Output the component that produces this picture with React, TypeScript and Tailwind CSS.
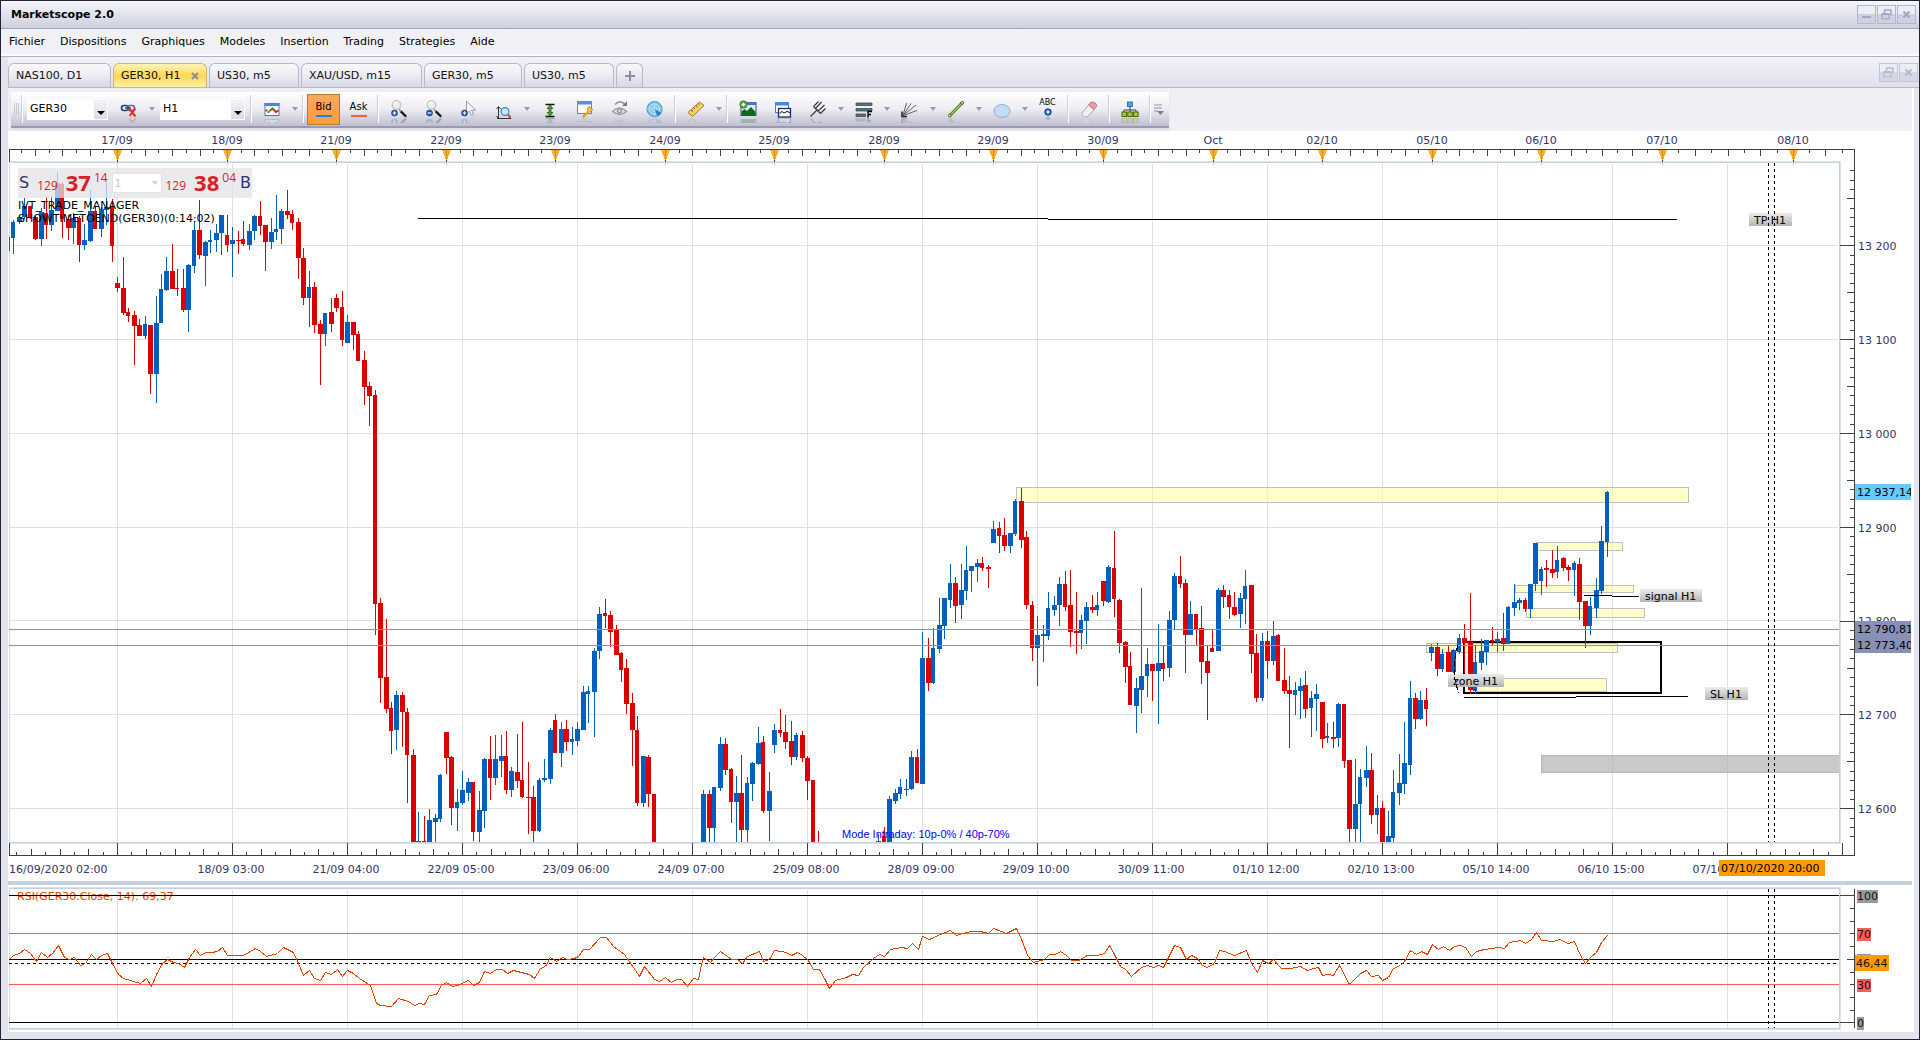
import React, { useId } from "react";

const FONT = "font-['DejaVu_Sans',Verdana,sans-serif]";

/* ---------- Price series: direction, then high / body top / body bottom / low ---------- */

const FIRST_SLOT = 19;
const slotX = (slot: number) => Math.round(117.2 + (slot - FIRST_SLOT) * 5.476);

const RUNS: { start: number; bars: string }[] = [
  {
    start: 0,
    bars: "B220 222 238 254,B216 217 222 224,B198 206 217 219,R206 206 218 219,R216 217 239 240,B208 212 239 246,R197 213 225 239,B196 210 225 231,B172 183 211 211,R182 184 219 238,R215 219 228 240,B213 218 228 244,R216 218 245 262,B224 240 245 250,B190 211 241 242,R207 211 229 229,B207 209 229 237,B183 207 210 225,R199 207 246 262,R277 283 288 292,R257 288 313 315,R308 312 316 322,R311 315 326 365,R319 325 336 336,B316 324 336 339,R325 325 374 394,B296 323 374 403,B274 289 323 323,B257 271 290 291,R244 271 289 289,R269 288 289 296,R269 288 310 312,B264 265 310 332,B221 230 266 273,R200 230 255 259,B241 242 256 286,B230 240 242 253,B224 233 240 252,B215 215 233 255,R215 235 245 252,B227 240 244 277,R231 240 241 254,R221 239 244 246,B224 231 245 250,B215 216 231 240,R201 216 226 235,R225 225 242 271,B218 232 242 249,B195 229 232 240,B209 211 229 244,R190 211 215 219,R210 214 223 230,R218 222 258 279,R248 258 298 305,B271 287 298 327,R282 287 325 333,R320 324 334 385,B313 313 334 346,R298 312 324 332,R294 298 308 312,R291 307 340 346,B315 322 343 343,R322 322 335 350,R331 334 361 361,R351 360 387 405,R382 386 396 426,R390 395 604 635,R598 603 678 703,R619 677 709 713,R702 708 731 754,B691 695 730 750,R692 695 712 747,R708 712 755 803,R749 755 842 842,B812 841 842 842,R816 841 842 842,B809 820 842 842,B814 818 822 842,B774 775 819 822,R732 732 758 774,R756 757 808 825,B789 802 808 831,B771 790 803 805,B778 782 793 801,R782 782 832 841,B791 810 832 842,B758 759 811 828,R736 759 778 800,B735 759 778 785,B735 756 761 777,R731 756 790 794,B767 771 790 797,R734 772 781 788,R722 780 797 798,R762 797 798 834,R786 797 831 842,B778 780 831 832,B759 778 780 782,B728 730 779 784,R714 720 753 753,B722 729 753 767,R720 729 742 751,B727 739 742 755,B722 729 741 746,B686 692 730 730,B686 691 694 723,B648 651 692 737,B607 614 651 659,R599 613 616 628,R611 615 632 647,R625 629 655 655,R652 653 670 682,R659 668 704 714,R693 703 730 766,R716 730 803 806,B756 756 803 807,R755 757 794 807,R794 794 842 842",
  },
  {
    start: 126,
    bars: "B790 794 842 842,R790 794 828 842,B787 787 828 842,B737 744 788 791,R738 744 770 775,R768 769 802 823,B776 793 802 842,R755 793 830 842,B777 783 830 842,B762 763 784 801,B727 743 764 765,R736 742 811 813,B772 791 811 841,B724 730 745 753,R709 730 733 737,R715 732 742 749,R721 741 757 765,B733 735 757 760,R731 735 758 762,R756 758 781 800,R780 780 842 842,R831 842 842 842",
  },
  {
    start: 158,
    bars: "B834 841 842 842,R827 836 842 842,B796 799 842 842,B789 793 801 804,B779 787 794 799,B779 789 790 796,B751 757 789 790,R749 757 783 783,B632 658 784 784,R638 658 683 691,B628 648 683 684,B598 625 649 653,B598 598 626 639,B564 583 600 608,R577 583 606 623,B564 590 605 619,B546 570 591 600,B566 566 571 592,B559 563 567 582,R557 563 568 571,R565 567 569 588,B521 529 543 543,R522 528 536 553,R518 535 546 551,B533 533 546 553,B499 501 534 536,R488 501 540 548,R531 537 605 609,R601 605 648 661,B616 635 648 686,B625 634 636 662,B592 608 636 640,B596 605 610 616,B577 584 605 626,R571 584 607 611,R570 605 632 647,R592 631 633 654,B615 620 633 649,B602 607 621 644,R595 607 610 613,B592 605 610 616,R581 581 601 606,B565 567 602 603,R531 568 599 617,R599 600 643 653,R641 642 667 683,R652 666 705 705,B678 688 706 733,B588 676 690 713,B648 664 676 697,R664 664 671 701,B624 663 671 724,R646 663 669 681,B611 620 668 677,B573 576 620 629,R556 576 584 588,R579 583 635 673,B601 614 635 635,R614 614 629 645,R606 628 662 684,R646 661 673 720,R630 648 652 652,B588 590 651 651,R585 590 597 608,R590 595 607 619,R592 607 615 616,B593 598 614 628,B570 586 599 624,R585 585 654 673,R634 653 698 702,B633 641 698 701,R631 641 661 679,B621 636 661 665,R634 635 681 681,R648 680 691 694,R676 690 694 748,B682 690 695 715,B678 686 691 719,R671 685 709 718,B691 698 708 737,B684 694 699 731,R702 702 739 748,B723 736 738 743,R722 737 739 748,B703 704 738 747,R704 704 761 768,R760 760 829 842,B759 804 829 842,B769 777 804 842,B746 770 778 787,R753 770 815 824,B795 808 815 834,R801 808 842 842,B811 836 842 842,B770 792 838 842,B754 783 793 805,B722 763 784 794,B681 698 765 775,R693 698 719 729,B691 700 719 720,R688 700 709 726,B644 647 653 661,R643 647 669 676,B649 654 669 672,R646 652 672 672,B649 650 672 673,B634 638 652 654,R624 638 643 673,R593 642 690 694,B646 662 691 694,B639 651 663 670,B640 640 652 665,R627 640 641 645,B632 639 642 652,R613 638 644 651,B606 607 644 644,B584 602 608 616,B598 600 603 610,R598 600 609 612,B584 584 609 618,B543 543 584 591,B567 569 581 595,R560 568 570 587,R550 569 573 578,B546 560 572 578,R557 558 568 571,R565 567 570 581,B561 563 570 596,R558 564 602 620,R601 601 626 648,B597 606 626 635,B578 590 608 618,B526 541 591 594,B491 492 542 557",
  },
];

const CANDLES = RUNS.flatMap(({ start, bars }) =>
  bars.split(",").map((bar, i) => {
    const [high, top, bottom, low] = bar.slice(1).split(" ").map(Number);
    return { x: slotX(start + i), up: bar[0] === "B", high, top, bottom, low };
  }),
);

const RSI_POINTS =
  "9,959 13,955 19,953 24,949 30,953 36,961 41,952 47,957 52,953 58,945 64,957 69,959 74,957 80,965 85,963 91,954 96,959 101,955 107,953 112,963 118,974 123,978 140,983 146,978 151,986 156,974 162,963 167,959 173,962 178,963 184,967 189,957 195,949 200,955 205,952 211,952 217,951 222,947 227,955 243,955 255,948 260,951 266,956 277,953 283,947 293,952 298,963 303,975 309,970 314,978 320,980 325,972 331,974 337,969 342,976 347,970 353,973 359,978 370,985 376,1003 380,1005 391,1006 398,998 408,1001 414,1005 419,1003 424,1004 429,995 436,994 441,985 446,982 452,986 457,985 468,980 473,985 479,982 484,971 490,973 496,969 502,969 507,973 513,970 529,974 534,978 540,968 545,966 550,957 556,961 562,957 567,959 574,958 578,956 583,949 589,949 600,937 606,937 613,946 624,954 633,967 639,976 644,966 654,979 659,981 665,977 671,982 676,979 681,979 687,986 693,978 698,979 701,964 703,957 710,962 715,956 720,951 731,959 737,959 742,963 747,956 759,951 763,961 769,959 774,950 786,952 791,955 797,952 802,955 808,960 813,969 819,969 824,978 829,988 835,980 846,977 852,974 858,975 863,967 873,958 879,954 884,956 890,949 901,947 907,948 912,943 918,949 922,936 929,939 940,934 950,930 956,935 962,933 971,931 980,931 988,933 993,928 1006,933 1016,928 1022,941 1027,955 1033,962 1044,959 1049,954 1055,954 1060,951 1066,955 1071,960 1078,960 1087,955 1097,955 1104,953 1109,945 1114,954 1120,966 1125,969 1131,976 1141,967 1147,965 1153,967 1158,965 1163,967 1169,955 1174,945 1180,947 1186,959 1191,955 1197,958 1202,965 1207,967 1214,963 1219,950 1224,951 1234,955 1246,950 1251,963 1257,972 1262,960 1268,963 1273,959 1279,966 1281,968 1290,968 1300,966 1307,970 1313,968 1318,967 1322,975 1328,974 1333,975 1339,965 1349,984 1360,973 1366,970 1371,976 1378,975 1382,980 1388,977 1393,968 1400,965 1404,961 1410,950 1416,954 1421,951 1427,954 1432,944 1438,949 1443,946 1449,950 1454,946 1460,945 1465,947 1471,956 1476,951 1484,949 1498,947 1504,948 1509,942 1520,940 1525,943 1531,939 1536,932 1541,940 1553,941 1559,939 1568,943 1574,941 1580,955 1585,963 1591,956 1596,952 1601,942 1607,935";

const SESSION_MARKS: [number, string][] = [
  [117, "17/09"], [227, "18/09"], [336, "21/09"], [446, "22/09"], [555, "23/09"], [665, "24/09"],
  [774, "25/09"], [884, "28/09"], [993, "29/09"], [1103, "30/09"], [1213, "Oct"], [1322, "02/10"],
  [1432, "05/10"], [1541, "06/10"], [1662, "07/10"], [1793, "08/10"],
];

const TIME_LABELS = [
  "18/09 03:00", "21/09 04:00", "22/09 05:00", "23/09 06:00", "24/09 07:00", "25/09 08:00", "28/09 09:00",
  "29/09 10:00", "30/09 11:00", "01/10 12:00", "02/10 13:00", "05/10 14:00", "06/10 15:00", "07/10 16:00",
];

const GRID_X = Array.from({ length: 15 }, (_, i) => 117 + i * 115);
const PRICES: [number, string][] = [
  [245, "13 200"], [339, "13 100"], [433, "13 000"], [527, "12 900"], [620, "12 800"], [714, "12 700"], [808, "12 600"],
];

const eighth = (i: number) => (i % 2 ? 3 : 6);

/* ticks as [position, length] */
const TOP_TICKS: [number, number][] = (() => {
  const out: [number, number][] = [];
  for (let i = 1; i < 8; i++) out.push([Math.round(117 - i * 13.7), eighth(i)]);
  SESSION_MARKS.slice(0, -1).forEach(([x], s) => {
    const step = (SESSION_MARKS[s + 1][0] - x) / 8;
    for (let i = 1; i < 8; i++) out.push([Math.round(x + i * step), eighth(i)]);
  });
  out.push([1809, 3], [1825, 6], [1842, 3]);
  return out;
})();

const BOTTOM_TICKS: [number, number][] = (() => {
  const out: [number, number][] = [[9, 12], [1842, 12]];
  for (let g = -1; g < 15; g++)
    for (let i = 0; i < 8; i++) {
      const x = Math.round(117 + g * 115 + i * 14.38);
      if (x > 10 && x < 1840) out.push([x, i === 0 ? 12 : eighth(i)]);
    }
  return out;
})();

const PRICE_TICKS: [number, number][] = Array.from({ length: 74 }, (_, i) => {
  const k = i - 8;
  return [Math.round(245.2 + k * 9.385), k % 10 === 0 ? 14 : k % 5 === 0 ? 7 : 4] as [number, number];
}).filter(([y]) => y < 842);

const ZONES = [
  [1016, 487, 673, 15],
  [1536, 542, 87, 8],
  [1515, 585, 119, 7],
  [1526, 608, 119, 9],
  [1426, 643, 192, 9],
  [1476, 678, 131, 13],
];

const NOTES: [number, number, number, string][] = [
  [1640, 589, 62, "signal H1"],
  [1448, 674, 56, "zone H1"],
  [1705, 687, 43, "SL H1"],
  [1749, 213, 43, "TP H1"],
];

const vPath = (list: number[], y1: number, y2: number) => list.map((x) => `M${x}.5 ${y1}V${y2}`).join("");

function PriceChart() {
  const shade = useId();
  return (
    <svg viewBox="8 131 1904 750" className="block h-auto w-full bg-white text-[11px]" role="img" aria-label="GER30 H1">
      <defs>
        <linearGradient id={shade} x1="0" y1="0" x2="0" y2="1">
          <stop offset="0" stopColor="#ececec" />
          <stop offset="1" stopColor="#b4b4b4" />
        </linearGradient>
      </defs>
      <g shapeRendering="crispEdges" fill="none">
        <path d={vPath(GRID_X, 164, 842)} stroke="#e0e0e0" />
        <path d={PRICES.map(([y]) => `M9 ${y}.5H1838`).join("")} stroke="#e0e0e0" />
        <path d="M9.5 164V842" stroke="#d4d8e0" />
        <g stroke="#c0c0c0">
          {ZONES.map(([x, y, w, h]) => (
            <rect key={`${x}-${y}`} x={x + 0.5} y={y + 0.5} width={w - 1} height={h} fill="#ffff99" fillOpacity="0.5" />
          ))}
          <rect x="1541.5" y="755.5" width="298" height="17" fill="#b0b0b0" fillOpacity="0.68" stroke="#b8b8b8" />
        </g>
        <rect x="1464" y="642" width="197" height="51" stroke="#000" strokeWidth="2" />
        <path d="M9.5 237V251" stroke="#0060c0" />
        {CANDLES.map((c, i) => (
          <g key={i} fill={c.up ? "#0060c0" : "#dc0000"}>
            <rect x={c.x} y={c.high} width="1" height={Math.max(c.low - c.high, 1)} />
            {c.top < 842 && <rect x={c.x - 2} y={c.top} width={i % 3 === 0 ? 4 : 5} height={Math.max(c.bottom - c.top, 1)} />}
          </g>
        ))}
        <path d="M9 629.5H1839M9 645.5H1839" stroke="#8890b8" />
        <path d="M418 218.5H1048M1048 219.5H1677M1464 697.5H1576M1576 696.5H1688M1584 595.5H1612M1612 596.5H1639" stroke="#000" />
        {NOTES.map(([x, y, w, label]) => (
          <rect key={label} x={x} y={y} width={w} height="13" fill={`url(#${shade})`} />
        ))}
        <path d="M1458 645C1453 662 1452 676 1459 693" stroke="#000" strokeDasharray="6 2" />
        <path d="M1768.5 163V842M1774.5 163V842" stroke="#000" strokeDasharray="3 3" />

        <path d="M9 161.5H1841M1840.5 161V843M9 843.5H1841" stroke="#dde3ea" />
        <path d="M9 162.5H1839.5V842.5H9" stroke="#c4d0e0" />
        <path d="M9.5 162V149.5H1854.5V855.5H9V843" stroke="#404040" />
        <path d={TOP_TICKS.map(([x, l]) => `M${x}.5 150v${l}`).join("")} stroke="#404040" />
        <path d={BOTTOM_TICKS.map(([x, l]) => `M${x}.5 855v-${l}`).join("")} stroke="#404040" />
        <path d={PRICE_TICKS.map(([y, l]) => `M1854 ${y}.5h-${l}`).join("")} stroke="#404040" />
        {SESSION_MARKS.map(([x]) => (
          <g key={x}>
            <path d={`M${x - 4} 150H${x + 5}L${x + 1} 160H${x}Z`} fill="#ffae33" />
            <path d={`M${x}.5 150V160`} stroke="#e08a10" />
            <path d={`M${x}.5 160V162`} stroke="#404040" />
            <path d={`M${x}.5 162V165`} stroke="#c4d0e0" />
          </g>
        ))}
      </g>
      <g fill="#333366" textAnchor="middle">
        {SESSION_MARKS.map(([x, label]) => (
          <text key={x} x={x} y="144">{label}</text>
        ))}
        {TIME_LABELS.map((label, i) => (
          <text key={label} x={231 + i * 115} y="873">{label}</text>
        ))}
        <text x="9" y="873" textAnchor="start">16/09/2020 02:00</text>
      </g>
      <g fill="#333366">
        {PRICES.map(([y, label]) => (
          <text key={label} x="1858" y={y + 5}>{label}</text>
        ))}
      </g>
      <rect x="1855" y="484" width="56" height="16" fill="#66ccff" />
      <rect x="1855" y="621" width="56" height="32" fill="#8890b8" />
      <rect x="1719" y="860" width="106" height="16" fill="#ff9900" />
      <g fill="#000">
        <text x="1857" y="496">12 937,14</text>
        <text x="1857" y="633">12 790,81</text>
        <text x="1857" y="649">12 773,40</text>
        <text x="1721" y="872">07/10/2020 20:00</text>
        {NOTES.map(([x, y, , label]) => (
          <text key={label} x={x + 5} y={y + 11}>{label}</text>
        ))}
      </g>
      <rect x="1911" y="480" width="1" height="180" fill="#fff" />
      <text x="842" y="838" fill="#0000ff" className="font-['Liberation_Sans',Arial,sans-serif]">
        Mode Intraday: 10p-0% / 40p-70%
      </text>
    </svg>
  );
}

const RSI_TICKS = Array.from({ length: 11 }, (_, i) => [Math.round(1022.3 - i * 12.7), i === 0 || i === 10 ? 14 : i === 5 ? 7 : 4]);

function RsiChart() {
  return (
    <svg viewBox="8 885 1904 146" className="block h-auto w-full bg-white text-[11px]" role="img" aria-label="RSI">
      <text x="17" y="900" fill="#dd4400">RSI(GER30.Close, 14): 69,37</text>
      <g shapeRendering="crispEdges" fill="none">
        <path d={vPath(GRID_X, 890, 1028)} stroke="#e0e0e0" />
        <path d="M9.5 890V1028" stroke="#d4d8e0" />
        <path d="M9 933.5H1839M9 984.5H1839" stroke="#ff5a5a" />
        <path d="M9 895.5H1854M9 959.5H1839M9 1022.5H1854" stroke="#000" />
        <path d="M9 963.5H1840M1768.5 889V1028M1774.5 889V1028" stroke="#000" strokeDasharray="3 3" />
        <polyline points={RSI_POINTS} stroke="#dd4400" transform="translate(.5 .5)" />
        <path d="M9 887.5H1841M1840.5 887V1030M9 1029.5H1841" stroke="#dde3ea" />
        <path d="M9 888.5H1839.5V1028.5H9" stroke="#c4d0e0" />
        <path d="M1854.5 889V1028" stroke="#404040" />
        <path d={RSI_TICKS.map(([y, l]) => `M1854 ${y}.5h-${l}`).join("")} stroke="#404040" />
      </g>
      <rect x="1857" y="890" width="21" height="13" fill="#999999" />
      <rect x="1857" y="928" width="14" height="13" fill="#ff5a5a" />
      <rect x="1857" y="954" width="14" height="13" fill="#999999" />
      <rect x="1857" y="979" width="14" height="13" fill="#ff5a5a" />
      <rect x="1857" y="1017" width="7" height="13" fill="#999999" />
      <rect x="1855" y="955" width="34" height="16" fill="#ff9900" />
      <g fill="#111">
        <text x="1857" y="900">100</text>
        <text x="1857" y="938">70</text>
        <text x="1856" y="967">46,44</text>
        <text x="1857" y="989">30</text>
        <text x="1857" y="1027">0</text>
      </g>
    </svg>
  );
}

/* ---------- Toolbar ---------- */

function Glyph({ children }: { children: React.ReactNode }) {
  return (
    <svg viewBox="0 0 18 23" className="h-[23px] w-[18px]" fill="none" aria-hidden="true">
      <g transform="matrix(1 0 0 -1 0 35)" opacity="0.22">{children}</g>
      {children}
    </svg>
  );
}

function Tool({ label, children }: { label: string; children: React.ReactNode }) {
  return (
    <button aria-label={label} className="flex h-full w-[35px] items-center justify-center pt-1">
      {children}
    </button>
  );
}

function More({ label }: { label: string }) {
  return (
    <button aria-label={`${label} options`} className="flex h-full w-[11px] items-center justify-center">
      <svg viewBox="0 0 6 4" className="h-1 w-1.5" aria-hidden="true"><path d="M0 0h6L3 4z" fill="#9a9ab4" /></svg>
    </button>
  );
}

const Sep = () => <div className="mx-0.5 my-[3px] w-0.5 self-stretch border-l border-[#cfcfdc] bg-white" />;

const PlusBadge = ({ minus = false }: { minus?: boolean }) => (
  <g>
    <circle cx="4.5" cy="13" r="3" fill="#1c56b0" stroke="#0b3a86" strokeWidth="0.6" />
    <path d={minus ? "M2.7 13h3.6" : "M2.7 13h3.6M4.5 11.2v3.6"} stroke="#fff" strokeWidth="1.2" />
  </g>
);

const Loupe = ({ minus = false }: { minus?: boolean }) => (
  <Glyph>
    <path d="M11 11.500 15.500 16" stroke="#1a1a1a" strokeWidth="2.400" strokeLinecap="round" />
    <path d="M8.500 8.500l2.500 3" stroke="#999" strokeWidth="1.400" />
    <circle cx="6.500" cy="5" r="4.200" fill="#eceeec" stroke="#c6c8c8" strokeWidth="1.500" />
    <path d="M3.800 4.500a3 3 0 0 1 4-2" stroke="#fff" strokeWidth="1.400" />
    <PlusBadge minus={minus} />
  </Glyph>
);

function Picker({ label, value, width }: { label: string; value: string; width: string }) {
  return (
    <div className={`relative flex h-[21px] items-center bg-white ${width}`}>
      <select aria-label={label} defaultValue={value} className="h-full w-full appearance-none bg-transparent px-[3px] text-[11px] text-black outline-none">
        <option>{value}</option>
      </select>
      <span className="pointer-events-none absolute right-px top-px flex h-[19px] w-[13px] items-end justify-center bg-linear-to-b from-[#f2f2f6] to-[#dcdce6] pb-1">
        <svg viewBox="0 0 8 4" className="h-1 w-2" aria-hidden="true"><path d="M0 0h8L4 4z" fill="#000" /></svg>
      </span>
    </div>
  );
}

function Toolbar() {
  return (
    <div role="toolbar" aria-label="Chart tools" className="ml-[3px] mt-[3px] flex h-9 w-max items-center border-b-2 border-[#9a9ab4] bg-linear-to-b from-white via-[#ededf3] to-[#bfbfd0] shadow-[0_2px_2px_#dcdce6]">
      <div className="ml-[3px] flex h-3 w-[5px] justify-between">
        <i className="w-px bg-[#c8c8d6]" /><i className="w-px bg-[#c8c8d6]" /><i className="w-px bg-[#c8c8d6]" />
      </div>
      <Sep />
      <Picker label="Symbol" value="GER30" width="ml-0.5 w-[81px]" />
      <div className="ml-[3px] flex self-stretch">
        <Tool label="Unlink">
          <Glyph>
            <rect x="1.5" y="5.5" width="7" height="5" rx="2.5" stroke="#2b3a66" strokeWidth="1.6" />
            <rect x="7.5" y="5.5" width="7" height="5" rx="2.5" stroke="#5a6c98" strokeWidth="1.6" />
            <path d="M5 8h6" stroke="#2b3a66" strokeWidth="1.4" />
            <path d="M9 8.5l6.5 8M15.5 8.5 9.5 16" stroke="#f02a10" strokeWidth="2" />
          </Glyph>
        </Tool>
        <More label="Link" />
      </div>
      <Picker label="Period" value="H1" width="ml-[3px] mr-[3px] w-[85px]" />
      <Sep />
      <div className="flex self-stretch">
        <Tool label="Chart type">
          <Glyph>
            <rect x="2" y="3.500" width="14" height="12" fill="#fff" stroke="#4a78c0" />
            <path d="M1.500 3h15v3h-15z" fill="#4a86dc" />
            <path d="M2.500 11l2-1" stroke="#d02020" strokeWidth="1.800" />
            <path d="M4.500 12.500l2-1" stroke="#208a20" strokeWidth="1.800" />
            <path d="M6.500 11l3-2.500 2 2" stroke="#208a20" strokeWidth="1.800" />
            <path d="M11 10l2 2 2.500-1.500" stroke="#d02020" strokeWidth="1.800" />
          </Glyph>
        </Tool>
        <More label="Chart type" />
      </div>
      <Sep />
      <button className="ml-px flex h-[31px] w-[33px] flex-col items-center justify-center gap-0.5 border border-[#b07c30] bg-linear-to-b from-[#f7a860] to-[#ff9c38] text-[10px] leading-3 text-black">
        Bid<span className="h-0.5 w-4 bg-[#0a84ff]" />
      </button>
      <button className="ml-0.5 flex h-[31px] w-[33px] flex-col items-center justify-center gap-0.5 text-[10px] leading-3 text-black">
        Ask<span className="h-0.5 w-4 bg-[#ff6038]" />
      </button>
      <Sep />
      <div className="flex self-stretch">
        <Tool label="Zoom in"><Loupe /></Tool>
        <Tool label="Zoom out"><Loupe minus /></Tool>
        <Tool label="Pointer zoom">
          <Glyph>
            <path d="M6.500 1v12.500l3-2.500 2 4.500 2-1-2-4.300h4z" fill="#fafafa" stroke="#9a9aa0" />
            <PlusBadge />
          </Glyph>
        </Tool>
        <Tool label="Scale zoom">
          <svg viewBox="0 0 18 18" className="h-[18px] w-[18px]" fill="none" aria-hidden="true">
            <path d="M3.500 5v11M1.500 7l2-2.500 2 2.500M1.500 14l2 2.500M16 16.500H2M14 14.500l2 2" stroke="#333" />
            <circle cx="10" cy="9.500" r="3.900" fill="#c6e6fa" stroke="#3a88b4" strokeWidth="1.200" />
            <path d="M12.700 12.300l2.800 3.200" stroke="#b0622a" strokeWidth="2" />
          </svg>
        </Tool>
        <More label="Scale zoom" />
        <Tool label="Fit height">
          <Glyph>
            <path d="M4.500 4.500h9M4.500 16.500h9" stroke="#111" strokeWidth="1.400" />
            <path d="M9 5l2.800 3.500H10V12.500h1.800L9 16 6.200 12.500H8V8.500H6.200z" fill="#4faa20" stroke="#1d5a10" strokeWidth="0.800" />
          </Glyph>
        </Tool>
        <Tool label="Chart properties">
          <Glyph>
            <rect x="1.500" y="1.500" width="14" height="12" fill="#fafcff" stroke="#5a88d0" />
            <path d="M1 1h15v3.500H1z" fill="#5590e4" />
            <path d="M6.500 16.500 12 10.500l-.5-2.500 2-2 1 2.500 2 .5-1 2.500-2.500.5-5 5z" fill="#ffc830" stroke="#b8801a" strokeWidth="0.800" />
          </Glyph>
        </Tool>
        <Tool label="Show or hide">
          <Glyph>
            <path d="M1.500 11.500Q8.500 4.500 15.500 11.500 8.500 17.500 1.500 11.500z" fill="#e2e2e4" stroke="#9a9a9e" strokeWidth="1.300" />
            <circle cx="8.500" cy="11" r="2.800" fill="#a2a2a6" /><circle cx="8.500" cy="11" r="1" fill="#e8e8e8" />
            <path d="M4 4.500Q9-1 14 4.500" stroke="#8e8e92" strokeWidth="1.500" /><path d="M11 6h5V1z" fill="#77777c" />
          </Glyph>
        </Tool>
        <Tool label="Radar">
          <Glyph>
            <circle cx="8.500" cy="9" r="7.600" fill="#7cc0e6" stroke="#4a98c8" />
            <circle cx="8.500" cy="9" r="5" stroke="#d4eefc" /><circle cx="8.500" cy="9" r="2.400" stroke="#d4eefc" />
            <path d="M8.500 9 15.500 13a7.600 7.600 0 0 1-4 3.200z" fill="#2a84bc" />
            <path d="M1 9h15M8.500 1.500v15" stroke="#b0dcf4" strokeWidth="0.700" />
          </Glyph>
        </Tool>
      </div>
      <Sep />
      <div className="flex self-stretch">
        <Tool label="Ruler">
          <Glyph>
            <path d="M1 12.500 12.500 2 17 5.500 5.500 16.500z" fill="#f7cf6a" stroke="#a8741c" />
            <path d="M4 10l2 1.500M6.500 7.800l1.500 1.200M8.800 5.700l2 1.500M11 3.700l1.400 1.100" stroke="#7a5010" />
          </Glyph>
        </Tool>
        <More label="Ruler" />
      </div>
      <Sep />
      <div className="flex self-stretch">
        <Tool label="Add indicator">
          <Glyph>
            <rect x="2" y="2.500" width="15" height="13" fill="#d8ecff" stroke="#2c4a80" />
            <path d="M2 2h15v3H2z" fill="#4078cc" />
            <path d="M2.500 15.500v-4l3-2.500 2.500 2 4-4 4.500 5v3.500z" fill="#0c6a18" />
            <circle cx="4.500" cy="4.500" r="3.700" fill="#58a432" stroke="#2f7018" strokeWidth="0.700" />
            <path d="M2.500 4.500h4M4.500 2.500v4" stroke="#fff" strokeWidth="1.300" />
          </Glyph>
        </Tool>
        <Tool label="Add chart">
          <Glyph>
            <rect x="1.500" y="2.500" width="13" height="10" fill="#fff" stroke="#4a78c0" />
            <path d="M1 2h14v3.500H1z" fill="#4a86dc" />
            <rect x="4.500" y="8.500" width="12" height="8.500" fill="#fff" stroke="#12306a" strokeWidth="1.300" />
            <path d="M5.500 13.500l2.500-2 2 1.500 3-1.500 3 1" stroke="#111" />
          </Glyph>
        </Tool>
        <Tool label="Pitchfork">
          <Glyph><path d="M1.500 16.500 8 10M4.500 6.500l7 7M6.500 8.500l6-6.500M9 11l6.500-6M11.500 13.500l5-5M4.500 6.500 9.500 1.500" stroke="#3a3a3a" strokeWidth="1.200" /></Glyph>
        </Tool>
        <More label="Pitchfork" />
        <Tool label="Fibonacci">
          <Glyph>
            <path d="M1 3h16v2.500H1zM1 8.500h16V11H1zM1 14h9.500v2.500H1z" fill="#56707c" stroke="#2d404a" strokeWidth="0.700" />
            <path d="M13 17.500V11.500h4M13 14.500h3" stroke="#000" strokeWidth="1.400" />
          </Glyph>
        </Tool>
        <More label="Fibonacci" />
        <Tool label="Gann fan">
          <Glyph><path d="M2 15.500 5.500 3M2 15.500 10 3.500M2 15.500 15 5M2 15.500 16 10.500" stroke="#666" /><path d="M1 11.500v5h5" stroke="#222" strokeWidth="1.500" /></Glyph>
        </Tool>
        <More label="Gann fan" />
        <Tool label="Line">
          <Glyph>
            <path d="M3 15.500 15 3" stroke="#3f6a18" strokeWidth="3" /><path d="M3 15.500 15 3" stroke="#9ed03a" strokeWidth="1.600" />
            <circle cx="2.800" cy="15.500" r="1.400" fill="#dff0b0" stroke="#333" strokeWidth="0.800" /><circle cx="15.200" cy="2.800" r="1.400" fill="#dff0b0" stroke="#333" strokeWidth="0.800" />
          </Glyph>
        </Tool>
        <More label="Line" />
        <Tool label="Ellipse">
          <svg viewBox="0 0 18 18" className="h-[18px] w-[18px]" aria-hidden="true"><ellipse cx="9" cy="9" rx="8" ry="6.500" fill="#c4dcf2" stroke="#88aed6" /></svg>
        </Tool>
        <More label="Ellipse" />
        <Tool label="Text">
          <span className="-mt-1 flex flex-col items-center">
            <span className="text-[8px] leading-2 text-black">ABC</span>
            <svg viewBox="0 0 10 12" className="mt-px h-3 w-2.5" fill="none" aria-hidden="true">
              <circle cx="5" cy="4" r="3.300" fill="#1c56b0" stroke="#0b3a86" strokeWidth="0.700" />
              <path d="M3 4h4M5 2v4" stroke="#fff" strokeWidth="1.200" /><circle cx="5" cy="10.500" r="2" fill="#9ab8ea" />
            </svg>
          </span>
        </Tool>
      </div>
      <Sep />
      <Tool label="Eraser">
        <Glyph>
          <path d="M2 13 8.500 5l5.500 4.500L8 16.500q-2 1.500-4.500-.5T2 13z" fill="#f0f0f0" stroke="#aaa" />
          <path d="M8.500 5l2.500-2.800q1.500-1 4 .8t1.500 3.500L14 9.500z" fill="#f09aa4" stroke="#c47480" />
        </Glyph>
      </Tool>
      <Sep />
      <Tool label="Strategy tree">
        <Glyph>
          <path d="M9 6v4M3 13v-3h12v3M9 10v3" stroke="#444" />
          <rect x="6.500" y="2" width="5" height="4.500" fill="#4aa0f0" stroke="#2060b0" strokeWidth="0.800" />
          <rect x="1" y="12" width="4.500" height="4.500" fill="#a8cc30" stroke="#48640c" />
          <rect x="6.800" y="12" width="4.500" height="4.500" fill="#a8cc30" stroke="#48640c" />
          <rect x="12.600" y="12" width="4.500" height="4.500" fill="#a8cc30" stroke="#48640c" />
        </Glyph>
      </Tool>
      <Sep />
      <button aria-label="More tools" className="flex h-full w-4 items-center justify-center pr-1">
        <svg viewBox="0 0 10 11" className="h-[11px] w-2.5" aria-hidden="true"><path d="M0 1h8M0 4h8M0 7h4" stroke="#9090aa" /><path d="M3 7h7L6.500 11z" fill="#7c7c9c" /></svg>
      </button>
    </div>
  );
}

/* ---------- Window chrome ---------- */

type ChromeKind = "minimise" | "restore" | "close";

function ChromeButton({ kind }: { kind: ChromeKind }) {
  return (
    <button aria-label={kind} className="flex size-[19px] items-center justify-center border border-[#b4b6d0] bg-linear-to-b from-[#eceef6] from-50% to-[#cfd1e0] to-50%">
      <svg viewBox="0 0 11 11" className="size-[11px]" fill="none" stroke="#a4a6c4" aria-hidden="true">
        {kind === "minimise" && <path d="M1 8h9" strokeWidth="2" />}
        {kind === "restore" && (
          <>
            <path d="M3 1h7.500M10 1v5.500M3.500 1v3" strokeWidth="1.500" />
            <path d="M1 5.500h7v4.500H1z" strokeWidth="1.200" /><path d="M.5 5h8" strokeWidth="2" />
          </>
        )}
        {kind === "close" && <path d="M2.500 2.500l6 6M8.500 2.500l-6 6" strokeWidth="2.200" />}
      </svg>
    </button>
  );
}

const TABS: { label: string; width: string; active?: boolean }[] = [
  { label: "NAS100, D1", width: "w-[103px]" },
  { label: "GER30, H1", width: "w-[94px]", active: true },
  { label: "US30, m5", width: "w-[90px]" },
  { label: "XAU/USD, m15", width: "w-[121px]" },
  { label: "GER30, m5", width: "w-[98px]" },
  { label: "US30, m5", width: "w-[90px]" },
];

function TabStrip() {
  return (
    <div className="flex h-[31px] items-end justify-between border-b border-[#b8b8cc] bg-linear-to-b from-[#f3f2f8] to-[#e0e0ec] pr-px">
      <div role="tablist" className="flex gap-0.5">
        {TABS.map((t, i) => (
          <button
            key={i}
            role="tab"
            aria-selected={!!t.active}
            className={`flex h-6 items-center justify-between rounded-t-md border border-b-0 px-[7px] pt-px text-[11px] text-[#111] ${t.width} ${
              t.active
                ? "border-[#c8b878] bg-linear-to-b from-[#fff4b8] via-[#ffd84c] to-[#fff0a0]"
                : "border-[#b8b8cc] bg-linear-to-b from-[#f8f8fc] via-[#ececf4] to-[#d8d8e4]"
            }`}
          >
            {t.label}
            {t.active && (
              <svg viewBox="0 0 8 8" className="size-2" aria-hidden="true"><path d="M1 1l6 6M7 1 1 7" stroke="#8c8aa8" strokeWidth="2" /></svg>
            )}
          </button>
        ))}
        <button aria-label="New tab" className="flex h-6 w-[27px] items-center justify-center rounded-t-md border border-b-0 border-[#b8b8cc] bg-linear-to-b from-[#f8f8fc] to-[#d8d8e4]">
          <svg viewBox="0 0 10 10" className="size-2.5" aria-hidden="true"><path d="M0 5h10M5 0v10" stroke="#8c8aa8" strokeWidth="2" /></svg>
        </button>
      </div>
      <div className="mb-[5px] flex gap-px opacity-70">
        <ChromeButton kind="restore" />
        <ChromeButton kind="close" />
      </div>
    </div>
  );
}

function Quote({ big, pip, tail }: { big: string; pip: string; tail: string }) {
  return (
    <span className="flex font-['Open_Sans',sans-serif] text-[#d82028]">
      <span className="mt-2.5 text-[12px] leading-4">{big}</span>
      <span className="ml-2 mt-px text-[22px] font-bold leading-[26px]">{pip}</span>
      <span className="ml-[3px] mt-0.5 text-[12px] leading-4">{tail}</span>
    </span>
  );
}

function QuotePanel() {
  return (
    <div className="absolute left-2.5 top-[37px] w-[234px]">
      <div className="flex h-[30px] justify-between bg-[#e3e3e7]/75 px-px text-[16px] leading-[30px] text-[#333366]">
        <button aria-label="Sell" className="flex gap-2">S<Quote big="129" pip="37" tail="14" /></button>
        <label className="relative mt-[5px] flex h-5 w-[50px]">
          <input aria-label="Amount" defaultValue="1" className="h-full w-full border border-[#e4e4e6] bg-white px-0.5 text-[11px] text-[#c8c8cc]" />
          <svg viewBox="0 0 6 4" className="absolute right-1 top-2 h-1 w-1.5" aria-hidden="true"><path d="M0 0h6L3 4z" fill="#d0d0d4" /></svg>
        </label>
        <button aria-label="Buy" className="flex gap-1"><Quote big="129" pip="38" tail="04" />B</button>
      </div>
      <div className="pt-px text-[11px] leading-[13px] text-black">
        <p>IVT_TRADE_MANAGER</p>
        <p>SHOWTIMETOEND(GER30)(0:14:02)</p>
      </div>
    </div>
  );
}

const MENU = ["Fichier", "Dispositions", "Graphiques", "Modeles", "Insertion", "Trading", "Strategies", "Aide"];

export default function App() {
  return (
    <div className={`flex min-h-screen flex-col border border-[#222436] bg-[#e4e4ee] text-black ${FONT}`}>
      <header className="flex h-7 items-center justify-between border-b border-[#a4a4c0] bg-linear-to-b from-[#f6f6fb] to-[#ced0dd] pl-2.5 pr-[3px]">
        <h1 className="pt-px text-[11px] font-bold">Marketscope 2.0</h1>
        <div className="flex gap-px">
          <ChromeButton kind="minimise" />
          <ChromeButton kind="restore" />
          <ChromeButton kind="close" />
        </div>
      </header>
      <nav className="flex h-[28px] items-center gap-[15px] border-b border-[#b0b0c8] bg-[#f0f0f5] pb-px pl-2 text-[11px] shadow-[inset_0_-2px_0_#fafafc]">
        {MENU.map((m) => (
          <button key={m}>{m}</button>
        ))}
      </nav>
      <main className="flex-1">
        <div className="pl-[7px]">
          <TabStrip />
        </div>
        <div className="mr-[5px] border-r-2 border-white pl-[7px]">
          <div className="h-[43px] bg-[#f0eff5] pt-px">
            <Toolbar />
          </div>
          <div className="relative border-b border-white">
            <PriceChart />
            <QuotePanel />
            <div className="h-1 bg-[#c4d0e0]" />
            <RsiChart />
          </div>
        </div>
      </main>
    </div>
  );
}
